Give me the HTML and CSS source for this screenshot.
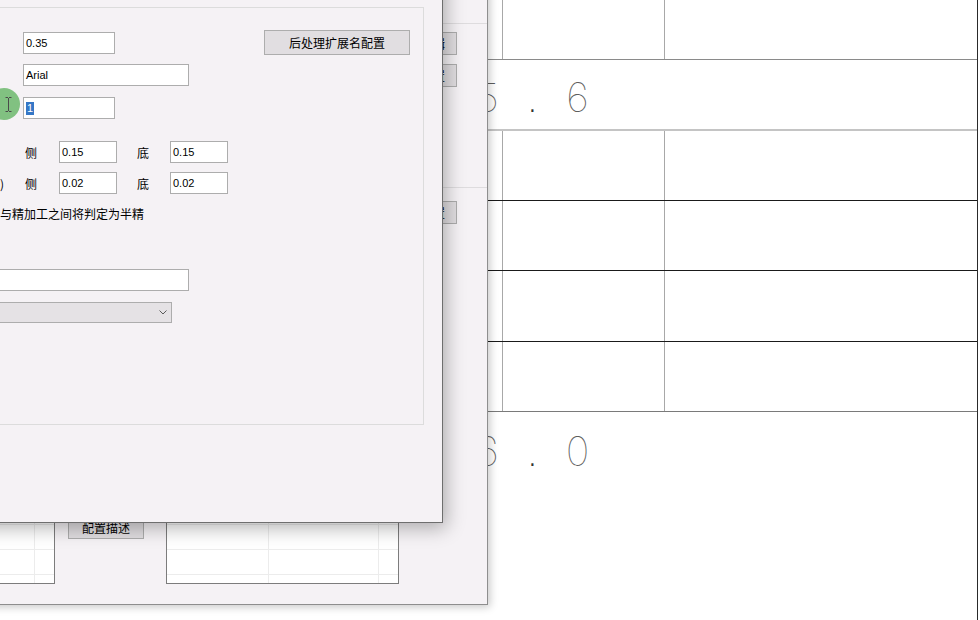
FILE: index.html
```html
<!DOCTYPE html>
<html lang="zh-CN">
<head>
  <meta charset="UTF-8">
  <meta name="viewport" content="width=device-width, initial-scale=1.0">
  <title>后处理配置</title>
  <link rel="stylesheet" href="styles.css">
</head>

<body>
  <!-- drawing sheet with the title block table -->
  <div class="sheet">
    <div class="table">
      <div class="row first"><div></div><div></div><div></div></div>
      <div class="band"><span>5</span><span class="dot">.</span><span>6</span></div>
      <div class="row"><div></div><div></div><div></div></div>
      <div class="row"><div></div><div></div><div></div></div>
      <div class="row tall"><div></div><div></div><div></div></div>
      <div class="row soft"><div></div><div></div><div></div></div>
      <div class="band last"><span>6</span><span class="dot">.</span><span>0</span></div>
    </div>
  </div>

  <!-- main settings window -->
  <div class="window back">
    <div class="pane top"></div>
    <div class="pane mid">
      <div class="btn small">编辑</div>
      <div class="btn small">配置</div>
    </div>
    <div class="pane low">
      <div class="btn small">设置</div>
    </div>
    <div class="lists">
      <div class="list">
        <div class="col" style="width: 134px"></div>
        <div class="col"></div>
      </div>
      <div class="btn desc">配置描述</div>
      <div class="list wide">
        <div class="col" style="width: 102px"></div>
        <div class="col" style="width: 110px"></div>
        <div class="col"></div>
      </div>
    </div>
  </div>

  <!-- options dialog -->
  <div class="window front">
    <div class="group">
      <div class="field top">
        <span class="label"></span>
        <div class="box">0.35</div>
        <div class="btn ext">后处理扩展名配置</div>
      </div>
      <div class="field b">
        <span class="label"></span>
        <div class="box long">Arial</div>
      </div>
      <div class="field c">
        <span class="label"></span>
        <div class="box"><span class="sel">1</span></div>
      </div>
      <div class="field side d">
        <span class="label"></span>
        <span class="tag">侧</span>
        <div class="box short">0.15</div>
        <span class="tag gap">底</span>
        <div class="box short">0.15</div>
      </div>
      <div class="field side e">
        <span class="label end">精加工(mm)</span>
        <span class="tag">侧</span>
        <div class="box short">0.02</div>
        <span class="tag gap">底</span>
        <div class="box short">0.02</div>
      </div>
      <p class="note">余量介于粗加工与精加工之间将判定为半精</p>
      <div class="box path"></div>
      <div class="combo">
        <svg width="8" height="5" viewBox="0 0 8 5"><path d="M0.5 0.5 L4 4 L7.5 0.5" fill="none" stroke="#5a5a5a"/></svg>
      </div>
    </div>
  </div>

  <!-- mouse pointer highlight -->
  <div class="pointer">
    <svg width="7" height="15" viewBox="0 0 7 15"><path d="M0.5 0.5h2.5M4 0.5h2.5M3.5 1v13M0.5 14.5h2.5M4 14.5h2.5" fill="none" stroke="#4a4a4a"/></svg>
  </div>
</body>

</html>
```

FILE: styles.css
```css
body {
  margin: 0;
  width: 980px;
  height: 620px;
  overflow: hidden;
  position: relative;
  background: #fff;
  font-family: "Noto Sans CJK SC", sans-serif;
  font-size: 12px;
  color: #000;
}

/* drawing */
.sheet {
  padding-left: 420px;
}

.table {
  width: 558px;
  height: 620px;
  box-sizing: border-box;
  border-right: 1px solid #2a2a2a;
}

.row {
  display: grid;
  grid-template-columns: 83px 162px 1fr;
  height: 70px;
  box-sizing: border-box;
  border-bottom: 1px solid #1a1a1a;
}

.row > div {
  border-right: 1px solid #a8a8a8;
}

.row > div:last-child {
  border-right: 0;
}

.row.first {
  height: 60px;
  border-bottom-color: #8a8a8a;
}

.row.tall {
  height: 71px;
}

.row.soft {
  border-bottom-color: #7a7a7a;
}

/* merged rows holding the drawn dimension text */
.band {
  display: flex;
  align-items: baseline;
  height: 71px;
  box-sizing: border-box;
  border-bottom: 2px solid #c4c4c4;
  padding: 18px 0 0 45px;
  font-family: "Inter", sans-serif;
  font-weight: 100;
  font-size: 40px;
  line-height: 1;
  color: #5e5e5e;
}

.band span {
  width: 45px;
  text-align: center;
}

.band .dot {
  font-family: "Liberation Mono", monospace;
  font-weight: 400;
  font-size: 18px;
  color: #333;
}

.band.last {
  height: auto;
  border-bottom: 0;
  padding-top: 20px;
}

/* windows */
.window {
  position: absolute;
  box-sizing: border-box;
  background: #f5f2f5;
}

.back {
  left: -320px;
  top: -60px;
  width: 808px;
  height: 665px;
  border: 1px solid #8e8e8e;
  box-shadow: 2px 2px 8px rgba(0, 0, 0, 0.22);
  display: flex;
  flex-direction: column;
  padding-bottom: 20px;
}

.pane {
  box-sizing: border-box;
  border-bottom: 1px solid #dedcde;
  display: flex;
  flex-direction: column;
  align-items: flex-end;
  gap: 9px;
  padding-right: 30px;
}

.pane.top {
  height: 83px;
}

.pane.mid {
  height: 164px;
  padding-top: 8px;
}

.pane.low {
  flex: 1;
  border-bottom: 0;
  padding-top: 13px;
}

.btn {
  box-sizing: border-box;
  display: flex;
  align-items: center;
  justify-content: center;
  background: #e1dee1;
  border: 1px solid #adadad;
  white-space: nowrap;
}

.btn.small {
  width: 48px;
  height: 23px;
}

.lists {
  display: flex;
  align-items: flex-start;
  padding-left: 219px;
}

.list {
  display: flex;
  width: 155px;
  height: 139px;
  box-sizing: border-box;
  border: 1px solid #7c7c7c;
  background: #fff repeating-linear-gradient(to top, transparent 0 8px, #ececec 8px 9px, transparent 9px 25px);
}

.list.wide {
  width: 233px;
  margin-left: 22px;
}

.col {
  box-sizing: border-box;
  border-right: 1px solid #ececec;
}

.col:last-child {
  flex: 1;
  border-right: 0;
}

.btn.desc {
  width: 76px;
  height: 24px;
  margin: 70px 0 0 13px;
}

.front {
  left: -200px;
  top: -40px;
  width: 643px;
  height: 563px;
  border: 1px solid #6e6e6e;
  box-shadow: 3px 5px 18px rgba(0, 0, 0, 0.3);
  padding: 46px 18px 0 9px;
}

.group {
  height: 418px;
  box-sizing: border-box;
  border: 1px solid #dcdcdc;
  padding: 22px 13px 0 105px;
}

.field {
  display: flex;
  align-items: center;
  height: 22px;
  white-space: nowrap;
}

.field .label {
  width: 107px;
  flex: none;
}

.field .label.end {
  box-sizing: border-box;
  padding-right: 19px;
  text-align: right;
}

.field.top {
  height: 25px;
}

.field.b {
  margin-top: 9px;
}

.field.c {
  margin-top: 11px;
}

.field.d {
  margin-top: 22px;
}

.field.e {
  margin-top: 9px;
}

.btn.ext {
  margin-left: auto;
  width: 146px;
  height: 25px;
}

.box {
  box-sizing: border-box;
  width: 92px;
  height: 22px;
  border: 1px solid #adadad;
  background: #fff;
  padding: 0 2px;
  font-family: "Liberation Sans", sans-serif;
  font-size: 11px;
  line-height: 20px;
}

.box.long {
  width: 166px;
}

.box.short {
  width: 58px;
}

.box.path {
  width: 273px;
  margin-top: 47px;
}

.sel {
  display: inline-block;
  padding: 0 1px;
  line-height: 13px;
  background: #3577c6;
  color: #fff;
}

.tag {
  width: 36px;
  padding-left: 2px;
  box-sizing: border-box;
}

.tag.gap {
  width: 53px;
  padding-left: 20px;
}

.note {
  margin: 11px 0 0;
  line-height: 17px;
  white-space: nowrap;
}

.combo {
  box-sizing: border-box;
  width: 256px;
  height: 21px;
  margin-top: 11px;
  border: 1px solid #adadad;
  background: #e5e2e5;
  display: flex;
  align-items: center;
  justify-content: flex-end;
  padding-right: 4px;
}

.pointer {
  position: absolute;
  left: -12px;
  top: 88px;
  width: 32px;
  height: 32px;
  border-radius: 50%;
  background: rgba(108, 184, 108, 0.85);
  display: flex;
  align-items: center;
  justify-content: flex-end;
  padding-right: 8px;
  box-sizing: border-box;
}
```
